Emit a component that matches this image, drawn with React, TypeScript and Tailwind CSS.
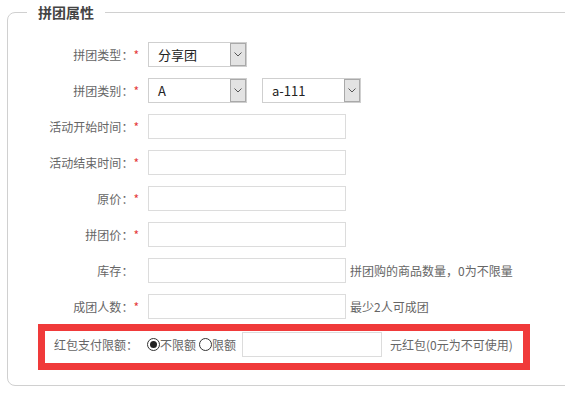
const font = {
  fontFamily: '"Microsoft YaHei", "Noto Sans CJK SC", "Noto Sans", sans-serif',
};

function Label({ text, required = true, w = "w-[131px]" }: { text: string; required?: boolean; w?: string }) {
  return (
    <div className={`${w} shrink-0 text-right text-[12px] text-[#666] leading-[25px]`}>
      {text}：<span className={required ? "text-[#e4393c]" : "invisible"}>*</span>
    </div>
  );
}

function Select({ value }: { value: string }) {
  return (
    <div className="relative flex h-[25px] w-[99px] items-center border border-[#cfcfcf] bg-white pl-[9px] text-[13px] text-[#222]">
      {value}
      <div className="absolute right-0 top-0 flex h-[23px] w-[16px] items-center justify-center border border-[#a9a9a9] bg-[#e3e3e3]">
        <svg width="8" height="5" viewBox="0 0 8 5">
          <path d="M0.5 0.5 L4 4 L7.5 0.5" fill="none" stroke="#555" strokeWidth="1" />
        </svg>
      </div>
    </div>
  );
}

function Input({ w = "w-[198px]" }: { w?: string }) {
  return <div className={`h-[25px] ${w} border border-[#dcdcdc] bg-white`} />;
}

function Row({ children }: { children: React.ReactNode }) {
  return <div className="flex h-[25px] items-center">{children}</div>;
}

function Radio({ checked }: { checked?: boolean }) {
  return (
    <span className="flex h-[13px] w-[13px] items-center justify-center rounded-full border border-[#333]">
      {checked && <span className="h-[7px] w-[7px] rounded-full bg-[#222]" />}
    </span>
  );
}

export default function App() {
  return (
    <div className="h-[397px] w-[565px] overflow-hidden bg-white pl-[7px] pt-[2px]" style={font}>
      <fieldset className="w-[600px] rounded-[8px] border border-[#d0d0d0] pb-[15px]">
        <legend className="ml-[19px] px-[11px] text-[14px] font-bold leading-[20px] text-[#444]">拼团属性</legend>
        <div className="flex flex-col gap-[11px] pt-[20px]">
          <Row>
            <Label text="拼团类型" />
            <div className="ml-[9px]">
              <Select value="分享团" />
            </div>
          </Row>
          <Row>
            <Label text="拼团类别" />
            <div className="ml-[9px] flex gap-[15px]">
              <Select value="A" />
              <Select value="a-111" />
            </div>
          </Row>
          {["活动开始时间", "活动结束时间", "原价", "拼团价"].map((t) => (
            <Row key={t}>
              <Label text={t} />
              <div className="ml-[9px]">
                <Input />
              </div>
            </Row>
          ))}
          <Row>
            <Label text="库存" required={false} />
            <div className="ml-[9px]">
              <Input />
            </div>
            <span className="ml-[4px] text-[12px] text-[#666]">拼团购的商品数量，0为不限量</span>
          </Row>
          <Row>
            <Label text="成团人数" />
            <div className="ml-[9px]">
              <Input />
            </div>
            <span className="ml-[4px] text-[12px] text-[#666]">最少2人可成团</span>
          </Row>
        </div>
        <div className="ml-[30px] mt-[5px] w-[492px] border-[7px] border-[#f03a3a]">
          <div className="flex items-center pb-[6px] pt-[1px] text-[12px] text-[#666]">
            <span className="ml-[9px] w-[85px] leading-[25px]">红包支付限额：</span>
            <span className="ml-[8px] flex items-center">
              <Radio checked />
              <span className="text-[#666]">不限额</span>
            </span>
            <span className="ml-[3px] flex items-center">
              <Radio />
              <span>限额</span>
            </span>
            <div className="ml-[6px]">
              <Input w="w-[140px]" />
            </div>
            <span className="ml-[8px]">元红包(0元为不可使用)</span>
          </div>
        </div>
      </fieldset>
    </div>
  );
}
